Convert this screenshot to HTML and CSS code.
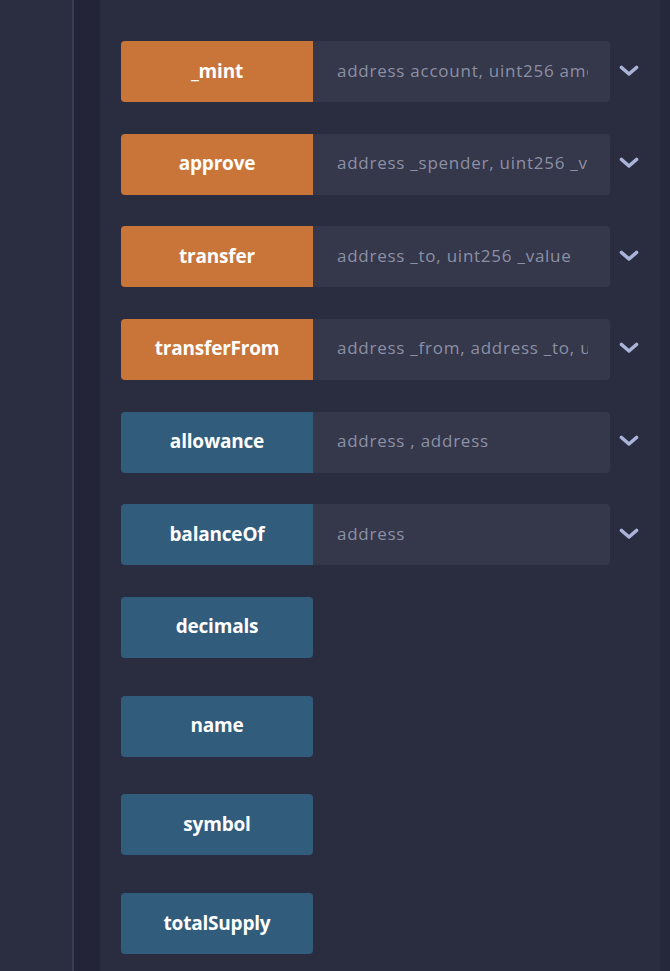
FILE: index.html
```html
<!DOCTYPE html>
<html>
<head>
<meta charset="utf-8">
<link rel="stylesheet" href="styles.css">
</head>
<body>
<div class="app">
  <div class="side"></div>
  <div class="gutter"></div>
  <div class="main">
    <div class="row">
      <div class="btn orange">_mint</div>
      <div class="input"><span class="ph">address account, uint256 amount</span></div>
      <div class="chev"><svg width="20" height="12" viewBox="0 0 20 12"><polyline points="2.5,2.5 10,9 17.5,2.5" fill="none" stroke="#aab4d8" stroke-width="3.6" stroke-linecap="round" stroke-linejoin="round"/></svg></div>
    </div>
    <div class="row">
      <div class="btn orange">approve</div>
      <div class="input"><span class="ph">address _spender, uint256 _value</span></div>
      <div class="chev"><svg width="20" height="12" viewBox="0 0 20 12"><polyline points="2.5,2.5 10,9 17.5,2.5" fill="none" stroke="#aab4d8" stroke-width="3.6" stroke-linecap="round" stroke-linejoin="round"/></svg></div>
    </div>
    <div class="row">
      <div class="btn orange">transfer</div>
      <div class="input"><span class="ph">address _to, uint256 _value</span></div>
      <div class="chev"><svg width="20" height="12" viewBox="0 0 20 12"><polyline points="2.5,2.5 10,9 17.5,2.5" fill="none" stroke="#aab4d8" stroke-width="3.6" stroke-linecap="round" stroke-linejoin="round"/></svg></div>
    </div>
    <div class="row">
      <div class="btn orange">transferFrom</div>
      <div class="input"><span class="ph">address _from, address _to, uint256 _value</span></div>
      <div class="chev"><svg width="20" height="12" viewBox="0 0 20 12"><polyline points="2.5,2.5 10,9 17.5,2.5" fill="none" stroke="#aab4d8" stroke-width="3.6" stroke-linecap="round" stroke-linejoin="round"/></svg></div>
    </div>
    <div class="row">
      <div class="btn blue">allowance</div>
      <div class="input"><span class="ph">address , address</span></div>
      <div class="chev"><svg width="20" height="12" viewBox="0 0 20 12"><polyline points="2.5,2.5 10,9 17.5,2.5" fill="none" stroke="#aab4d8" stroke-width="3.6" stroke-linecap="round" stroke-linejoin="round"/></svg></div>
    </div>
    <div class="row">
      <div class="btn blue">balanceOf</div>
      <div class="input"><span class="ph">address</span></div>
      <div class="chev"><svg width="20" height="12" viewBox="0 0 20 12"><polyline points="2.5,2.5 10,9 17.5,2.5" fill="none" stroke="#aab4d8" stroke-width="3.6" stroke-linecap="round" stroke-linejoin="round"/></svg></div>
    </div>
    <div class="row single">
      <div class="btn blue solo">decimals</div>
    </div>
    <div class="row single">
      <div class="btn blue solo">name</div>
    </div>
    <div class="row single">
      <div class="btn blue solo">symbol</div>
    </div>
    <div class="row single">
      <div class="btn blue solo">totalSupply</div>
    </div>
  </div>
  <div class="edge"></div>
</div>
</body>
</html>
```
FILE: styles.css
```css
html, body {
  margin: 0;
  padding: 0;
  height: 100%;
  background: #2a2d40;
}
.app {
  display: flex;
  height: 971px;
  overflow: hidden;
}
.side {
  width: 72px;
  flex: none;
  background: #2b2e41;
  border-right: 2px solid #3a3d53;
}
.gutter {
  width: 26px;
  flex: none;
  background: #232437;
}
.main {
  flex: 1;
  background: #2a2c3f;
  padding: 41px 0 0 21px;
  display: flex;
  flex-direction: column;
}
.edge {
  width: 10px;
  flex: none;
  background: #25273a;
}
.row {
  display: flex;
  align-items: center;
  height: 61px;
  flex: none;
  margin-bottom: 31.67px;
}
.row.single {
  margin-bottom: 37.7px;
}
.btn {
  width: 192px;
  height: 61px;
  flex: none;
  display: flex;
  align-items: center;
  justify-content: center;
  color: #ffffff;
  font-family: "Open Sans", "DejaVu Sans", sans-serif;
  font-weight: 700;
  font-size: 19px;
  letter-spacing: -0.2px;
  padding-bottom: 2px;
  box-sizing: border-box;
  border-radius: 4px 0 0 4px;
}
.btn.solo {
  border-radius: 4px;
}
.orange {
  background: #c97539;
}
.blue {
  background: #325c7b;
}
.input {
  width: 297px;
  height: 61px;
  flex: none;
  box-sizing: border-box;
  padding: 0 22px 0 24px;
  background: #35374b;
  border-radius: 0 4px 4px 0;
  display: flex;
  align-items: center;
}
.ph {
  display: block;
  width: 100%;
  overflow: hidden;
  white-space: nowrap;
  color: #8c90a4;
  font-family: "Open Sans", "DejaVu Sans", sans-serif;
  font-size: 17px;
  letter-spacing: 0.75px;
  line-height: 24px;
  padding-bottom: 2px;
}
.chev {
  width: 38px;
  display: flex;
  justify-content: center;
  align-items: center;
  padding-bottom: 2px;
}
.chev svg {
  display: block;
}
```
